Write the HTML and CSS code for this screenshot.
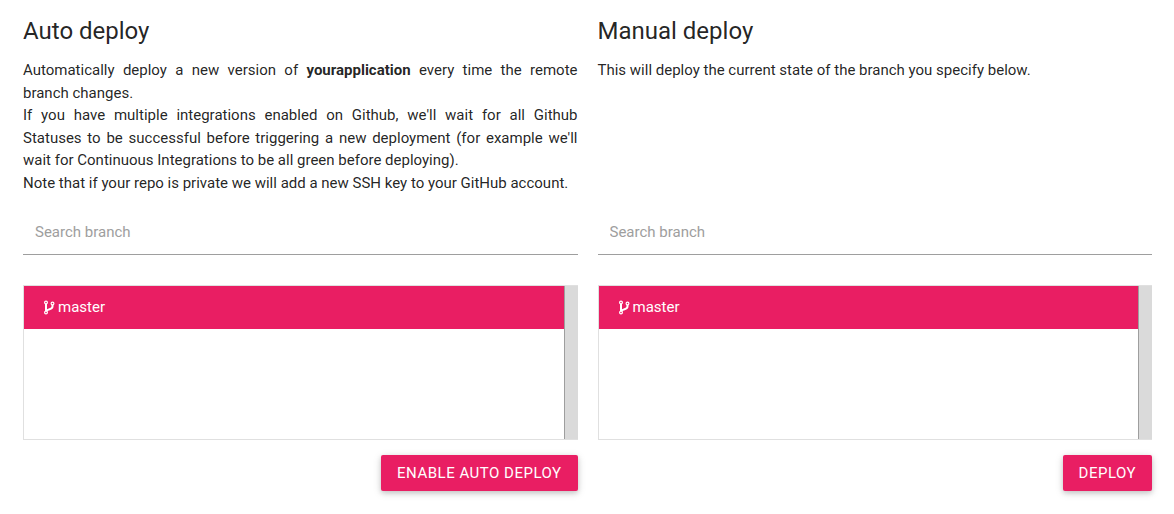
FILE: index.html
```html
<!DOCTYPE html>
<html lang="en">
<head>
<meta charset="utf-8">
<title>Deploy</title>
<link rel="stylesheet" href="styles.css">
</head>
<body>
<main class="row">
  <section class="panel">
    <h2 class="title">Auto deploy</h2>
    <div class="description">
      <p>Automatically deploy a new version of <strong>yourapplication</strong> every time the remote branch changes.</p>
      <p>If you have multiple integrations enabled on Github, we'll wait for all Github Statuses to be successful before triggering a new deployment (for example we'll wait for Continuous Integrations to be all green before deploying).</p>
      <p>Note that if your repo is private we will add a new SSH key to your GitHub account.</p>
    </div>
    <input class="search" type="text" placeholder="Search branch" aria-label="Search branch for auto deploy">
    <div class="branches">
      <ul class="list">
        <li><a class="branch" href="#"><svg class="icon" viewBox="0 0 11 15" aria-hidden="true"><g fill="none" stroke="currentColor" stroke-width="1.200"><circle cx="2" cy="2.500" r="1.400"/><circle cx="2" cy="12.500" r="1.400"/><circle cx="8.500" cy="3.500" r="1.400"/><path stroke-width="2" d="M2 4v7M8.500 5v1.500c0 3.500-4.500 2-6 4.500"/></g></svg>master</a></li>
      </ul>
      <div class="track"></div>
    </div>
    <div class="actions"><button class="button" type="button">Enable auto deploy</button></div>
  </section>
  <section class="panel">
    <h2 class="title">Manual deploy</h2>
    <div class="description">
      <p>This will deploy the current state of the branch you specify below.</p>
    </div>
    <input class="search" type="text" placeholder="Search branch" aria-label="Search branch for manual deploy">
    <div class="branches">
      <ul class="list">
        <li><a class="branch" href="#"><svg class="icon" viewBox="0 0 11 15" aria-hidden="true"><g fill="none" stroke="currentColor" stroke-width="1.200"><circle cx="2" cy="2.500" r="1.400"/><circle cx="2" cy="12.500" r="1.400"/><circle cx="8.500" cy="3.500" r="1.400"/><path stroke-width="2" d="M2 4v7M8.500 5v1.500c0 3.500-4.500 2-6 4.500"/></g></svg>master</a></li>
      </ul>
      <div class="track"></div>
    </div>
    <div class="actions"><button class="button" type="button">Deploy</button></div>
  </section>
</main>
</body>
</html>
```
FILE: styles.css
```css
* { box-sizing: border-box; }
body {
  margin: 0;
  background: #fff;
  color: rgba(0, 0, 0, 0.87);
  font: 15px/1.5 Roboto, sans-serif;
}
.row {
  display: grid;
  grid-template-columns: 1fr 1fr;
  grid-template-rows: auto 1fr auto auto auto;
  column-gap: 20px;
  padding: 16px 22px 24px 23px;
}
.panel {
  display: grid;
  grid-row: span 5;
  grid-template-rows: subgrid;
  min-width: 0;
}
.title { margin: 0 0 13px; font-size: 24px; line-height: 30px; font-weight: 400; }
.description { text-align: justify; }
.description p { margin: 0; }
.description strong { font-weight: 700; }
.search {
  width: 100%;
  height: 46px;
  margin: 15px 0 30px;
  padding: 0 12px;
  border: 0;
  border-bottom: 1px solid #9e9e9e;
  outline: 0;
  background: transparent;
  font: inherit;
}
.search::placeholder { color: #9e9e9e; opacity: 1; }
.branches { display: flex; height: 155px; border: 1px solid #e0e0e0; border-right: 0; }
.list { flex: 1; margin: 0; padding: 0; list-style: none; }
.branch {
  display: flex;
  align-items: center;
  gap: 3px;
  height: 43px;
  padding: 0 20px;
  background: #e91e63;
  color: #fff;
  text-decoration: none;
}
.icon { width: 11px; height: 15px; }
.track { width: 14px; border-left: 1px solid #9e9e9e; background: #dadada; }
.actions { display: flex; justify-content: flex-end; padding-top: 15px; }
.button {
  height: 36px;
  padding: 0 16px;
  border: 0;
  border-radius: 2px;
  background: #e91e63;
  color: #fff;
  font: inherit;
  letter-spacing: 0.5px;
  text-transform: uppercase;
  box-shadow: 0 2px 5px rgba(0, 0, 0, 0.16), 0 2px 10px rgba(0, 0, 0, 0.12);
}
```
